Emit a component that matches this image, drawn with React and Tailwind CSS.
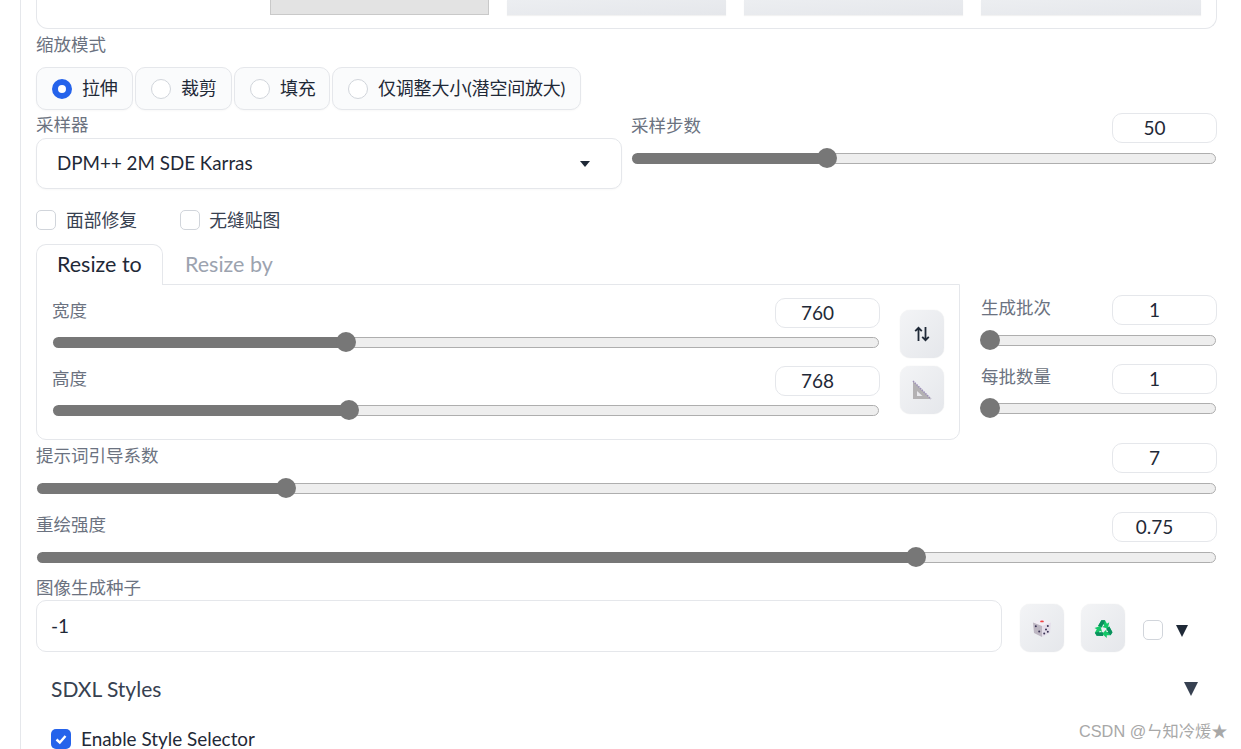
import React from "react";

const font = "font-['Lato','Noto_Sans_CJK_SC',sans-serif]";

const Label = ({ children, className = "" }) => (
  <div className={`text-[17.5px] leading-[22px] text-[#6b7280] ${className}`}>{children}</div>
);

const NumberBox = ({ value }) => (
  <div className="w-[105px] h-[30px] shrink-0 rounded-[10px] border border-[#e5e7eb] bg-white pr-[20px] text-center text-[19px] leading-[27px] text-[#1f2937]">
    {value}
  </div>
);

// fill = distance from the track start to the thumb centre
const Slider = ({ fill, className = "" }) => (
  <div className={`flex items-center h-5 mx-px ${className}`}>
    <div className="h-[11px] rounded-l-full bg-[#777777]" style={{ width: fill }} />
    <div className="relative z-10 w-5 h-5 shrink-0 -mx-[10px] rounded-full bg-[#777777]" />
    <div className="flex-1 h-[11px] rounded-r-full border border-[#aeaeae] bg-[#eeeeee]" />
  </div>
);

const SliderField = ({ label, value, fill, gap = "mt-[5px]", className = "" }) => (
  <div className={className}>
    <div className="flex items-start justify-between">
      <Label className="pt-[2px]">{label}</Label>
      <NumberBox value={value} />
    </div>
    <Slider fill={fill} className={gap} />
  </div>
);

const Radio = ({ label, checked, width }) => (
  <div
    className="flex items-center h-[43px] pl-[15px] gap-[10px] rounded-[10px] border border-[#e5e7eb] bg-[#fafbfc] shadow-[0_1px_2px_rgba(0,0,0,0.03)]"
    style={{ width }}
  >
    {checked ? (
      <span className="w-5 h-5 shrink-0 rounded-full border-[6px] border-[#2563eb] bg-white" />
    ) : (
      <span className="w-5 h-5 shrink-0 rounded-full border border-[#d1d5db] bg-white" />
    )}
    <span className="text-[18px] tracking-[-0.2px] text-[#1f2937] whitespace-nowrap">{label}</span>
  </div>
);

const Checkbox = ({ label, gap }) => (
  <div className={`flex items-center ${gap}`}>
    <span className="w-5 h-5 rounded-[5px] border border-[#d1d5db] bg-white" />
    <span className="text-[17.8px] leading-5 text-[#374151]">{label}</span>
  </div>
);

const ToolButton = ({ children, className = "" }) => (
  <div className={`flex items-center justify-center w-[44px] h-[48px] shrink-0 rounded-[10px] bg-gradient-to-br from-[#f3f4f6] to-[#e5e7eb] shadow-[0_0_1px_rgba(0,0,0,0.15)] ${className}`}>
    {children}
  </div>
);

const Triangle = ({ className, fill }) => (
  <svg viewBox="0 0 12 12" preserveAspectRatio="none" className={className}>
    <polygon points="0,0 12,0 6,12" fill={fill} />
  </svg>
);

const SwapIcon = () => (
  <svg viewBox="0 0 16 16" className="w-[16px] h-[16px]" fill="none" stroke="#1f2937" strokeWidth="1.8">
    <path d="M4.5 15V2M1.2 5.2 4.5 1.8l3.3 3.4" />
    <path d="M11.5 1v13M8.2 10.8l3.3 3.4 3.3-3.4" />
  </svg>
);

const RulerIcon = () => (
  <svg viewBox="0 0 20 20" className="w-5 h-5">
    <path d="M1 1 19 19H1Z" fill="#b3b1b3" />
    <path d="M5 11 10.5 16H5Z" fill="#e8e8ec" />
    <path d="M1 1 19 19" stroke="#9d90b8" strokeWidth="1.5" strokeDasharray="1.5 1" />
  </svg>
);

const DiceIcon = () => (
  <svg viewBox="0 0 20 20" className="w-5 h-5">
    <path d="M10 1 19 4.5 10 8 1 4.5Z" fill="#f2edf5" />
    <path d="M1 4.5 10 8V19L2 15Z" fill="#bdb6c2" />
    <path d="M19 4.5 10 8V19L18 15Z" fill="#e4deea" />
    <ellipse cx="10" cy="3.4" rx="1.9" ry="0.9" fill="#ef4444" />
    <circle cx="3.8" cy="8.2" r="1" fill="#3b3456" />
    <circle cx="7.2" cy="13.4" r="1" fill="#3b3456" />
    <circle cx="15.8" cy="8" r="1" fill="#3b3456" />
    <circle cx="14" cy="11.4" r="1" fill="#3b3456" />
    <circle cx="12.2" cy="15.4" r="1" fill="#3b3456" />
    <circle cx="15.8" cy="13.8" r="1" fill="#3b3456" />
  </svg>
);

const RecycleArrow = ({ rotate }) => (
  <g transform={`rotate(${rotate} 12 13)`}>
    <polygon points="6.3,9.3 9.8,3.5 13.6,3.5 15.6,7 18,5.6 16.6,12 10.4,10.4 12.8,9 11.8,7.2 9.9,10.9" fill="#14c768" />
    <polygon points="6.3,9.3 9.8,3.5 13.6,3.5 12.2,7.9 11.8,7.2 9.9,10.9" fill="#0b8f5e" />
  </g>
);

const RecycleIcon = () => (
  <svg viewBox="0 0 24 24" className="w-[23px] h-[23px]">
    <RecycleArrow rotate={0} />
    <RecycleArrow rotate={120} />
    <RecycleArrow rotate={240} />
  </svg>
);

export default function App() {
  return (
    <div className={`relative h-[749px] w-[1241px] overflow-hidden bg-white ${font}`}>
      <div className="ml-[20px] h-full border-l border-[#e5e7eb] pl-[15px] pr-[24px]">
        {/* Cut off image card */}
        <div className="h-[29px] rounded-b-[12px] border border-t-0 border-[#e5e7eb] pl-[233px]">
          <div className="flex gap-[18px]">
            <div className="w-[219px] h-[15px] border border-t-0 border-[#c9c9c9] bg-[#e3e3e3]" />
            <div className="w-[219px] h-[15px] bg-gradient-to-br from-[#eceef1] to-[#e5e7eb] shadow-[0_1px_1px_rgba(0,0,0,0.05)]" />
            <div className="w-[219px] h-[15px] bg-gradient-to-br from-[#eceef1] to-[#e5e7eb] shadow-[0_1px_1px_rgba(0,0,0,0.05)]" />
            <div className="w-[220px] h-[15px] bg-gradient-to-br from-[#eceef1] to-[#e5e7eb] shadow-[0_1px_1px_rgba(0,0,0,0.05)]" />
          </div>
        </div>

        <Label className="mt-[5px]">缩放模式</Label>
        <div className="mt-[11px] flex gap-[2px]">
          <Radio label="拉伸" checked width={97} />
          <Radio label="裁剪" width={97} />
          <Radio label="填充" width={96} />
          <Radio label="仅调整大小(潜空间放大)" width={249} />
        </div>

        {/* Sampler */}
        <div className="mt-[3px] flex">
          <div className="w-[586px] shrink-0 pt-[1px]">
            <Label>采样器</Label>
            <div className="mt-[2px] flex h-[51px] items-center justify-between rounded-[10px] border border-[#e5e7eb] bg-white pl-[20px] pr-[31px] shadow-[0_1px_2px_rgba(0,0,0,0.03)]">
              <span className="text-[18.8px] text-[#1f2937]">DPM++ 2M SDE Karras</span>
              <Triangle className="w-[10px] h-[6px]" fill="#1f2937" />
            </div>
          </div>
          <div className="flex-1 pl-[9px]">
            <SliderField label="采样步数" value="50" fill={195} />
          </div>
        </div>

        <div className="mt-[21px] flex gap-[43px]">
          <Checkbox label="面部修复" gap="gap-[10px]" />
          <Checkbox label="无缝贴图" gap="gap-[9px]" />
        </div>

        {/* Size tabs */}
        <div className="mt-[14px] flex">
          <div className="w-[924px] shrink-0">
            <div className="flex items-end h-[40px]">
              <div className="relative z-10 -mb-px h-[41px] w-[127px] rounded-t-[10px] border border-b-0 border-[#e5e7eb] bg-white pl-[20px] text-[21.5px] leading-[39px] text-[#1f2937]">
                Resize to
              </div>
              <div className="pl-[22px] text-[21.5px] leading-[40px] text-[#9ca3af]">Resize by</div>
            </div>
            <div className="flex h-[156px] rounded-b-[10px] border border-[#e5e7eb] px-[15px] pt-[13px]">
              <div className="w-[828px] shrink-0">
                <SliderField label="宽度" value="760" fill={293} gap="mt-[4px]" />
                <SliderField label="高度" value="768" fill={296} gap="mt-[4px]" className="mt-[14px]" />
              </div>
              <div className="ml-[20px] mt-[12px] flex flex-col gap-[8px]">
                <ToolButton><SwapIcon /></ToolButton>
                <ToolButton><RulerIcon /></ToolButton>
              </div>
            </div>
          </div>
          <div className="flex-1 pl-[21px] pt-[51px]">
            <SliderField label="生成批次" value="1" fill={8} />
            <SliderField label="每批数量" value="1" fill={8} gap="mt-[4px]" className="mt-[14px]" />
          </div>
        </div>

        <SliderField label="提示词引导系数" value="7" fill={249} className="mt-[3px]" />
        <SliderField label="重绘强度" value="0.75" fill={879} className="mt-[14px]" />

        {/* Seed */}
        <Label className="mt-[10px]">图像生成种子</Label>
        <div className="mt-[1px] flex items-end">
          <div className="w-[966px] h-[52px] shrink-0 rounded-[10px] border border-[#e5e7eb] bg-white pl-[14px] text-[19px] leading-[50px] text-[#1f2937]">
            -1
          </div>
          <ToolButton className="ml-[18px]"><DiceIcon /></ToolButton>
          <ToolButton className="ml-[17px]"><RecycleIcon /></ToolButton>
          <span className="ml-[18px] mb-[12px] w-5 h-5 rounded-[5px] border border-[#d1d5db] bg-white" />
          <Triangle className="ml-[13px] mb-[15px] w-[12px] h-[12px]" fill="#1f2937" />
        </div>

        <div className="mt-[23px] flex items-center justify-between pl-[15px] pr-[19px]">
          <span className="text-[21px] leading-7 text-[#374151]">SDXL Styles</span>
          <Triangle className="w-[14px] h-[14px]" fill="#374151" />
        </div>

        <div className="mt-[26px] flex items-center gap-[10px] pl-[15px]">
          <span className="flex w-5 h-5 items-center justify-center rounded-[5px] bg-[#2563eb]">
            <svg viewBox="0 0 14 14" className="w-[14px] h-[14px]" fill="none" stroke="white" strokeWidth="2.4">
              <path d="M2.5 7.5 5.8 10.5 11.5 4" />
            </svg>
          </span>
          <span className="text-[18.9px] leading-5 text-[#1f2937] whitespace-nowrap">Enable Style Selector</span>
        </div>
      </div>

      {/* Watermark */}
      <div className="absolute left-[1079px] top-[720px] font-['Liberation_Sans','Noto_Sans_CJK_SC',sans-serif] text-[16.3px] leading-[22px] text-[#a8a8a8] whitespace-nowrap">
        CSDN @ㄣ知冷煖★
      </div>
    </div>
  );
}
